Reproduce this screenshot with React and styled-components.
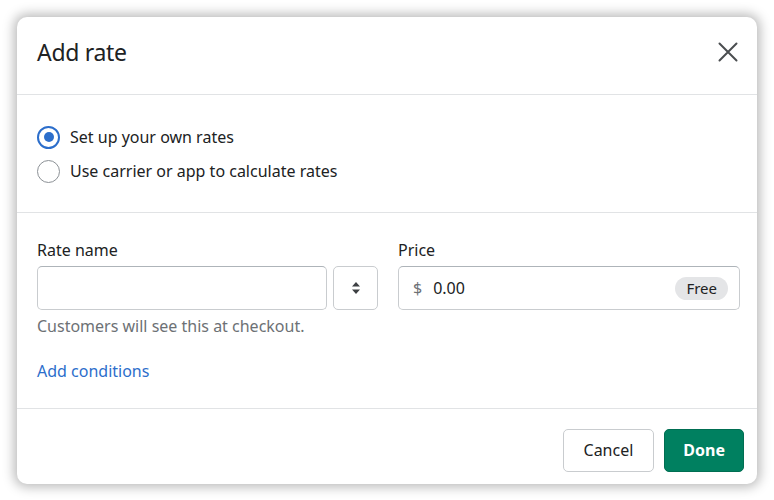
import React from "react";
import styled, { createGlobalStyle } from "styled-components";

const Global = createGlobalStyle`
  html, body { margin: 0; padding: 0; background: #ffffff; }
  body { font-family: "Noto Sans", "Open Sans", sans-serif; color: #202223; }
  * { box-sizing: border-box; }
`;

const Page = styled.div`
  width: 774px;
  height: 500px;
  padding: 17px 17px 16px 17px;
`;

const Modal = styled.div`
  width: 740px;
  height: 467px;
  background: #fff;
  border-radius: 10px;
  box-shadow: 0 0 12px 3px rgba(0, 0, 0, 0.28);
  display: flex;
  flex-direction: column;
  overflow: hidden;
`;

const Header = styled.div`
  height: 78px;
  display: flex;
  align-items: flex-start;
  justify-content: space-between;
  padding: 19px 16px 0 20px;
  border-bottom: 1px solid #e1e3e5;
`;

const Title = styled.h2`
  margin: 0;
  font-size: 23px;
  line-height: 32px;
  font-weight: 400;
  letter-spacing: -0.3px;
  color: #202223;
`;

const CloseButton = styled.button`
  border: none;
  background: none;
  padding: 0;
  margin-top: 3px;
  width: 26px;
  height: 26px;
  display: flex;
  align-items: center;
  justify-content: center;
  cursor: pointer;
`;

const Section = styled.div`
  padding: ${(p) => p.$pad};
  border-bottom: 1px solid #e1e3e5;
  height: ${(p) => p.$h};
`;

const RadioList = styled.div`
  display: flex;
  flex-direction: column;
  gap: 12px;
`;

const RadioRow = styled.label`
  display: flex;
  align-items: center;
  gap: 10px;
  font-size: 16px;
  color: #202223;
  height: 22px;
`;

const RadioCircle = styled.span`
  width: 23px;
  height: 23px;
  border-radius: 50%;
  border: ${(p) => (p.$checked ? "2px solid #2c6ecb" : "1.5px solid #8c9196")};
  display: flex;
  align-items: center;
  justify-content: center;
  &::after {
    content: "";
    display: ${(p) => (p.$checked ? "block" : "none")};
    width: 10px;
    height: 10px;
    border-radius: 50%;
    background: #2c6ecb;
  }
`;

const FieldsRow = styled.div`
  display: flex;
  gap: 20px;
  align-items: flex-start;
`;

const Field = styled.div`
  display: flex;
  flex-direction: column;
  flex: none;
  width: ${(p) => p.$w};
`;

const Label = styled.div`
  font-size: 16px;
  color: #202223;
  margin-bottom: 5px;
  height: 22px;
`;

const InputGroup = styled.div`
  display: flex;
  gap: 6px;
`;

const TextBox = styled.div`
  height: 44px;
  flex: ${(p) => (p.$grow ? 1 : "none")};
  border: 1px solid #c9cccf;
  border-top-color: #aeb4b9;
  border-radius: 5px;
  display: flex;
  align-items: center;
  padding: 0 11px 0 14px;
  font-size: 16px;
  background: #fff;
`;

const StepperButton = styled.button`
  width: 45px;
  height: 44px;
  border: 1px solid #c9cccf;
  border-radius: 5px;
  background: #fff;
  display: flex;
  align-items: center;
  justify-content: center;
  padding: 0;
`;

const Prefix = styled.span`
  color: #6d7175;
  margin-right: 11px;
`;

const Value = styled.span`
  flex: 1;
  color: #202223;
`;

const Pill = styled.span`
  background: #e4e5e7;
  border-radius: 12px;
  padding: 1px 11px 2px;
  font-size: 15px;
  color: #202223;
`;

const Help = styled.div`
  margin-top: 5px;
  font-size: 16px;
  color: #6d7175;
`;

const Link = styled.a`
  display: inline-block;
  margin-top: 23px;
  font-size: 16px;
  color: #2c6ecb;
  text-decoration: none;
`;

const Footer = styled.div`
  flex: 1;
  display: flex;
  justify-content: flex-end;
  align-items: center;
  gap: 10px;
  padding: 7px 13px 0 20px;
`;

const Button = styled.button`
  height: 43px;
  padding: 0 ${(p) => (p.$primary ? "18px" : "20px")};
  border-radius: 5px;
  font-family: inherit;
  font-size: 16px;
  font-weight: ${(p) => (p.$primary ? 700 : 400)};
  color: ${(p) => (p.$primary ? "#fff" : "#202223")};
  background: ${(p) => (p.$primary ? "#008060" : "#fff")};
  border: 1px solid ${(p) => (p.$primary ? "#006e52" : "#c9cccf")};
`;

export default function App() {
  return (
    <Page>
      <Global />
      <Modal>
        <Header>
          <Title>Add rate</Title>
          <CloseButton aria-label="Close">
            <svg width="20" height="20" viewBox="0 0 20 20">
              <path d="M1.5 1.5 L18.5 18.5 M18.5 1.5 L1.5 18.5" stroke="#4a4d50" strokeWidth="2" strokeLinecap="round" />
            </svg>
          </CloseButton>
        </Header>
        <Section $pad="31px 20px 0" $h="118px">
          <RadioList>
            <RadioRow>
              <RadioCircle $checked />
              Set up your own rates
            </RadioRow>
            <RadioRow>
              <RadioCircle />
              Use carrier or app to calculate rates
            </RadioRow>
          </RadioList>
        </Section>
        <Section $pad="26px 17px 0 20px" $h="196px">
          <FieldsRow>
            <Field $w="341px">
              <Label>Rate name</Label>
              <InputGroup>
                <TextBox $grow />
                <StepperButton aria-label="Select">
                  <svg width="10" height="14" viewBox="0 0 10 14">
                    <path d="M5 1 L9 5.5 H1 Z M5 13 L9 8.5 H1 Z" fill="#3d4043" />
                  </svg>
                </StepperButton>
              </InputGroup>
              <Help>Customers will see this at checkout.</Help>
              <div>
                <Link href="#">Add conditions</Link>
              </div>
            </Field>
            <Field $w="342px">
              <Label>Price</Label>
              <TextBox>
                <Prefix>$</Prefix>
                <Value>0.00</Value>
                <Pill>Free</Pill>
              </TextBox>
            </Field>
          </FieldsRow>
        </Section>
        <Footer>
          <Button>Cancel</Button>
          <Button $primary>Done</Button>
        </Footer>
      </Modal>
    </Page>
  );
}
